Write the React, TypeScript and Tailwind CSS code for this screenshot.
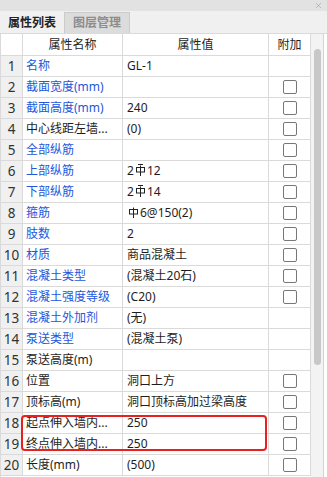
import { X } from "lucide-react";

type Row = {
  name: string;
  value?: React.ReactNode;
  blue: boolean;
  check: boolean;
};

// steel grade symbol, drawn since no font carries it
function Rebar({ bar = false }: { bar?: boolean }) {
  return (
    <svg width="11" height="13" viewBox="0 0 11 13" className="inline-block mx-[1px] -mt-[3px] align-middle">
      {bar && <path d="M3 1.5H8" stroke="#222" strokeWidth="1" />}
      <rect x="1.5" y="4.5" width="8" height="4.5" fill="none" stroke="#222" strokeWidth="1" />
      <path d="M5.5 2.5V13" stroke="#222" strokeWidth="1" />
    </svg>
  );
}

const rows: Row[] = [
  { name: "名称", value: "GL-1", blue: true, check: false },
  { name: "截面宽度(mm)", blue: true, check: true },
  { name: "截面高度(mm)", value: "240", blue: true, check: true },
  { name: "中心线距左墙...", value: "(0)", blue: false, check: true },
  { name: "全部纵筋", blue: true, check: true },
  { name: "上部纵筋", value: <>2<Rebar bar />12</>, blue: true, check: true },
  { name: "下部纵筋", value: <>2<Rebar bar />14</>, blue: true, check: true },
  { name: "箍筋", value: <><Rebar />6@150(2)</>, blue: true, check: true },
  { name: "肢数", value: "2", blue: true, check: true },
  { name: "材质", value: "商品混凝土", blue: true, check: true },
  { name: "混凝土类型", value: "(混凝土20石)", blue: true, check: true },
  { name: "混凝土强度等级", value: "(C20)", blue: true, check: true },
  { name: "混凝土外加剂", value: "(无)", blue: true, check: false },
  { name: "泵送类型", value: "(混凝土泵)", blue: true, check: false },
  { name: "泵送高度(m)", blue: false, check: false },
  { name: "位置", value: "洞口上方", blue: false, check: true },
  { name: "顶标高(m)", value: "洞口顶标高加过梁高度", blue: false, check: true },
  { name: "起点伸入墙内...", value: "250", blue: false, check: true },
  { name: "终点伸入墙内...", value: "250", blue: false, check: true },
  { name: "长度(mm)", value: "(500)", blue: false, check: true },
];

const cell = "border-r border-b border-[#dadada] flex items-center";

export default function App() {
  return (
    <div
      className="w-[327px] h-[477px] bg-white overflow-hidden text-[12px] text-[#1e1e1e] flex flex-col"
      style={{ fontFamily: '"Noto Sans", "Noto Sans CJK SC", sans-serif' }}
    >
      {/* title strip */}
      <div className="h-[11px] bg-[#e2e2e2] flex items-center justify-end pr-[4px]">
        <X size={9} strokeWidth={1.5} className="text-[#9a9a9a]" />
      </div>

      {/* tabs */}
      <div className="h-[23px] bg-[#f0f0f0] flex items-stretch pt-[1px] border-b border-[#dadada]">
        <div className="w-[64px] flex items-center justify-center font-bold text-[#222] text-[12px]">
          属性列表
        </div>
        <div className="w-[66px] flex items-center justify-center font-bold text-[#8c8c8c] bg-[#dcdcdc] border border-[#cacaca] border-b-0">
          图层管理
        </div>
      </div>

      {/* table + scrollbar */}
      <div className="flex flex-1 min-h-0">
        <div className="relative w-[311px] border-l border-[#dadada]">
          <div className="grid grid-cols-[22px_100px_146px_42px]">
            <div className={`${cell} h-[22px] bg-white`} />
            <div className={`${cell} h-[22px] justify-center`}>属性名称</div>
            <div className={`${cell} h-[22px] justify-center`}>属性值</div>
            <div className={`${cell} h-[22px] justify-center`}>附加</div>
            {rows.map((r, i) => (
              <div key={i} className="contents">
                <div className={`${cell} h-[21px] justify-center bg-[#f0f0f0] text-[13.5px] text-[#333]`}>
                  {i + 1}
                </div>
                <div className={`${cell} h-[21px] pl-[3px] whitespace-nowrap ${r.blue ? "text-[#2456dc]" : ""}`}>
                  {r.name}
                </div>
                <div className={`${cell} h-[21px] pl-[4px] whitespace-nowrap`}>{r.value}</div>
                <div className={`${cell} h-[21px] justify-center`}>
                  {r.check && (
                    <span className="w-[14px] h-[14px] rounded-[2px] border border-[#777] bg-white" />
                  )}
                </div>
              </div>
            ))}
          </div>
          {/* highlight box */}
          <div className="absolute left-[20px] top-[381px] w-[246px] h-[36px] border-[2.5px] border-[#e82020] rounded-[4px]" />
        </div>
        <div className="w-[13px] bg-[#f3f3f3] border-r border-[#d4d4d4] pt-[15px] flex justify-center">
          <div className="w-[7px] h-[316px] rounded-full bg-[#c8c8c8]" />
        </div>
      </div>
    </div>
  );
}
